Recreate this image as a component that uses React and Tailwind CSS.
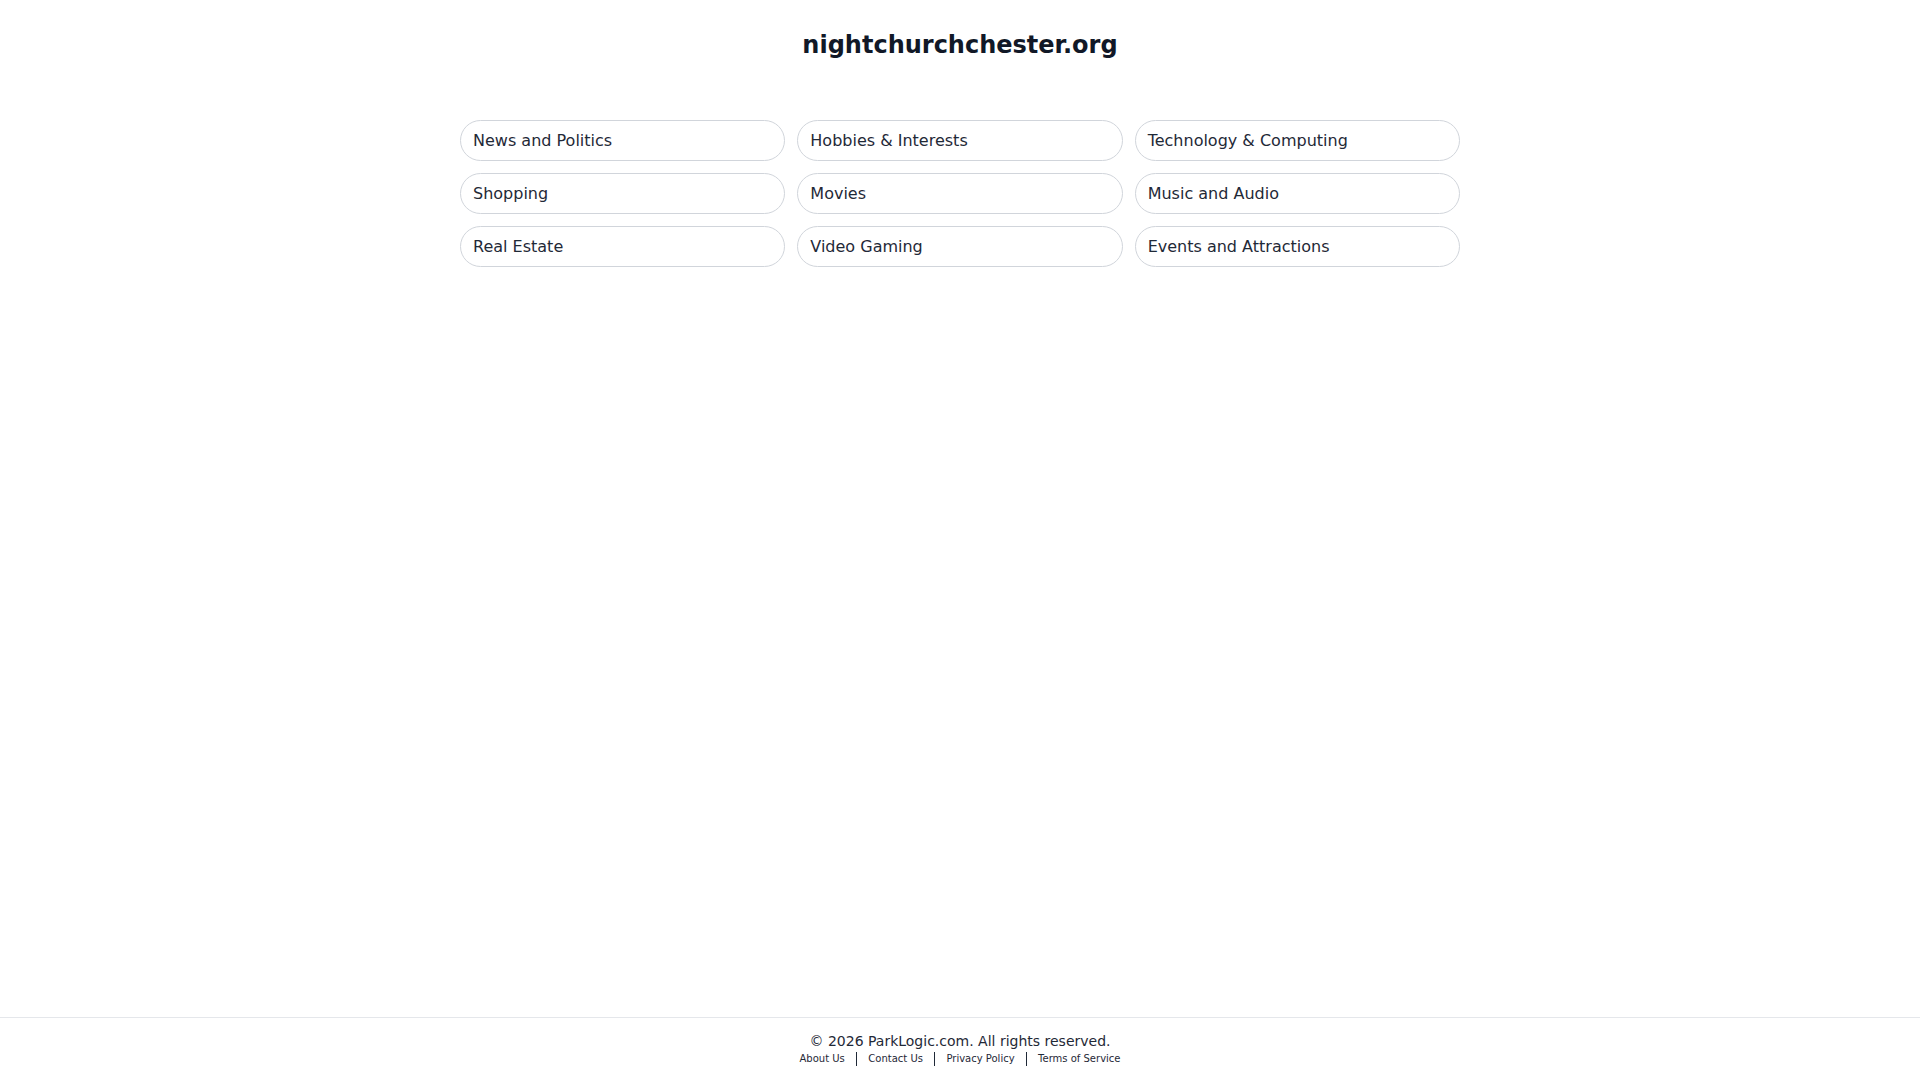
const categories = [
  "News and Politics",
  "Hobbies & Interests",
  "Technology & Computing",
  "Shopping",
  "Movies",
  "Music and Audio",
  "Real Estate",
  "Video Gaming",
  "Events and Attractions",
];

const links = ["About Us", "Contact Us", "Privacy Policy", "Terms of Service"];

export default function App() {
  return (
    <div
      className="min-h-screen flex flex-col bg-white"
      style={{ fontFamily: '"DejaVu Sans", sans-serif' }}
    >
      <main className="flex-1">
        <h1 className="pt-[29px] text-center text-2xl leading-8 font-bold text-[#111827]">
          nightchurchchester.org
        </h1>

        <div className="mx-auto mt-[59px] grid w-[1000px] grid-cols-3 gap-x-3 gap-y-3">
          {categories.map((c) => (
            <a
              key={c}
              href="#"
              className="flex h-[41px] items-center rounded-full border border-[#d1d5db] px-3 text-base text-[#1f2937]"
            >
              {c}
            </a>
          ))}
        </div>
      </main>

      <footer className="border-t border-[#e5e7eb] pt-[13px] pb-[13px] text-center text-[#1f2937]">
        <p className="text-[14px] leading-5">© 2026 ParkLogic.com. All rights reserved.</p>
        <div className="flex items-center justify-center text-[10px] leading-4">
          {links.map((l, i) => (
            <span key={l} className="flex items-center">
              {i > 0 && <span className="mx-[11px] h-[14px] w-[1.5px] bg-[#1f2937]" />}
              <a href="#">{l}</a>
            </span>
          ))}
        </div>
      </footer>
    </div>
  );
}
